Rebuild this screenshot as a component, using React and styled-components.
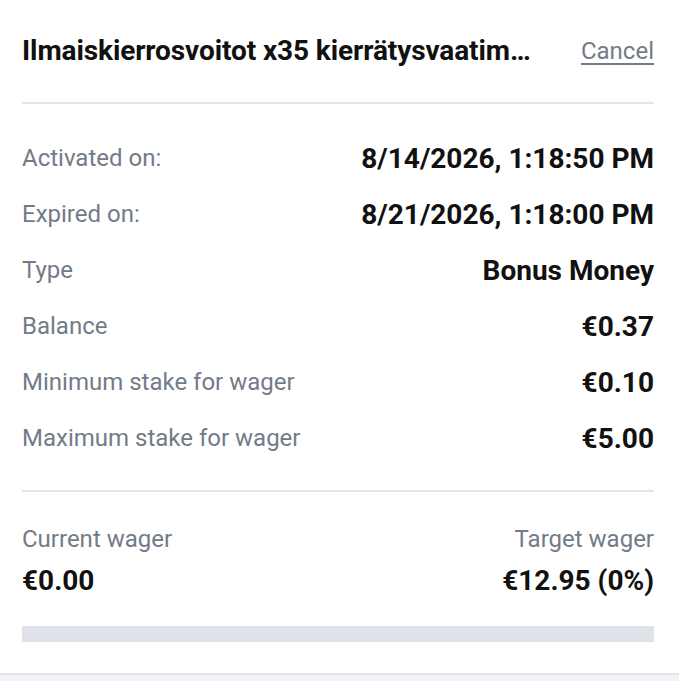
import React from "react";
import styled, { createGlobalStyle } from "styled-components";

const GlobalStyle = createGlobalStyle`
  html, body {
    margin: 0;
    padding: 0;
    background: #f2f4f7;
    font-family: Roboto, "Liberation Sans", sans-serif;
  }
`;

const Panel = styled.div`
  background: #fff;
  height: 675px;
  box-sizing: border-box;
  padding: 0 25px 0 22px;
  border-bottom: 2px solid #e3e5ea;
`;

const Header = styled.div`
  display: flex;
  align-items: center;
  justify-content: space-between;
  gap: 40px;
  height: 102px;
  border-bottom: 2px solid #e3e5ea;
`;

const Title = styled.h2`
  margin: 0;
  font-size: 28px;
  line-height: 32px;
  font-weight: 700;
  letter-spacing: -0.1px;
  color: #111;
  white-space: nowrap;
  overflow: hidden;
  text-overflow: ellipsis;
  max-width: 514px;
`;

const CancelLink = styled.a`
  font-size: 24px;
  line-height: 28px;
  color: #737b89;
  text-decoration: underline;
  text-underline-offset: 4px;
  cursor: pointer;
`;

const Details = styled.div`
  display: flex;
  flex-direction: column;
  padding: 26px 0 24px;
  border-bottom: 2px solid #e3e5ea;
`;

const Row = styled.div`
  display: flex;
  align-items: center;
  justify-content: space-between;
  height: 56px;
`;

const Label = styled.span`
  font-size: 24px;
  line-height: 28px;
  color: #737b89;
`;

const Value = styled.span`
  font-size: 28px;
  line-height: 33px;
  font-weight: 700;
  color: #111;
`;

const Wager = styled.div`
  display: grid;
  grid-template-columns: 1fr 1fr;
  row-gap: 11px;
  padding-top: 33px;
`;

const Cell = styled.div`
  display: flex;
  justify-content: ${p => (p.right ? "flex-end" : "flex-start")};
`;

const Progress = styled.div`
  margin-top: 29px;
  height: 16px;
  background: #dfe2e8;
`;

const Fill = styled.div`
  height: 100%;
  background: #2f9e44;
`;

const rows = [
  ["Activated on:", "8/14/2026, 1:18:50 PM"],
  ["Expired on:", "8/21/2026, 1:18:00 PM"],
  ["Type", "Bonus Money"],
  ["Balance", "€0.37"],
  ["Minimum stake for wager", "€0.10"],
  ["Maximum stake for wager", "€5.00"]
];

export default function App() {
  const percent = 0;
  return (
    <>
      <GlobalStyle />
      <Panel>
        <Header>
          <Title title="Ilmaiskierrosvoitot x35 kierrätysvaatimuksella">
            Ilmaiskierrosvoitot x35 kierrätysvaatimuksella
          </Title>
          <CancelLink>Cancel</CancelLink>
        </Header>
        <Details>
          {rows.map(([label, value]) => (
            <Row key={label}>
              <Label>{label}</Label>
              <Value>{value}</Value>
            </Row>
          ))}
        </Details>
        <Wager>
          <Cell>
            <Label>Current wager</Label>
          </Cell>
          <Cell right>
            <Label>Target wager</Label>
          </Cell>
          <Cell>
            <Value>€0.00</Value>
          </Cell>
          <Cell right>
            <Value>€12.95 ({percent}%)</Value>
          </Cell>
        </Wager>
        <Progress>
          <Fill style={{ width: `${percent}%` }} />
        </Progress>
      </Panel>
    </>
  );
}
